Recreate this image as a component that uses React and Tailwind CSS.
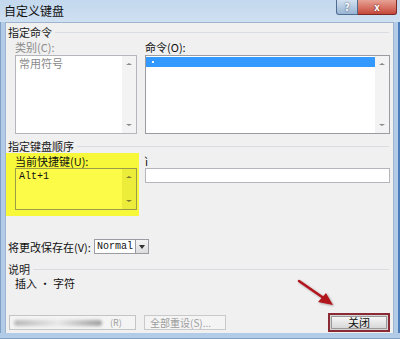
const cn = { fontFamily: '"Noto Sans CJK SC", "Noto Sans", sans-serif' };
const mono = { fontFamily: '"Liberation Mono", "DejaVu Sans Mono", monospace' };

function ScrollArrows({ tint = "bg-[#f3f3f3]", up = "border-b-[#8a8a8a]", down = "border-t-[#8a8a8a]" }) {
  return (
    <div className={`w-[14px] h-full flex flex-col justify-between items-center py-[7px] ${tint}`}>
      <span className={`w-0 h-0 border-x-[3px] border-x-transparent border-b-[2px] ${up}`} />
      <span className={`w-0 h-0 border-x-[3px] border-x-transparent border-t-[2px] ${down}`} />
    </div>
  );
}

function GroupHeader({ children }) {
  return (
    <div className="h-[14px] flex items-center pl-[2px] pr-[4px] text-[11px] text-[#1a1a1a] leading-[14px]">
      <span className="whitespace-nowrap">{children}</span>
      <span className="flex-1 ml-[3px] border-t border-[#d9dde2]" />
    </div>
  );
}

export default function App() {
  return (
    <div className="relative w-[400px] h-[339px] overflow-hidden bg-[#b7cfe9] flex flex-col" style={cn}>
      {/* title bar */}
      <div className="h-[22px] flex items-start bg-gradient-to-b from-[#c3d8ee] to-[#cfe0f1]">
        <span className="pl-[4px] pt-[4px] text-[12px] leading-[14px] text-[#111]">自定义键盘</span>
        <div className="ml-auto flex mr-[3px]">
          <div className="w-[22px] h-[15px] rounded-bl-[3px] border border-t-0 border-[#4f6d93] bg-gradient-to-b from-[#d3e1f0] to-[#98b4d3] flex items-center justify-center text-[10px] font-bold text-white leading-none" style={{ textShadow: "0 0 2px #2a4060" }}>?</div>
          <div className="w-[39px] h-[15px] rounded-br-[3px] border border-t-0 border-l-0 border-[#7a2a24] bg-gradient-to-b from-[#e6a295] to-[#c5463a] flex items-center justify-center text-[10px] font-bold text-white leading-none" style={{ textShadow: "0 0 2px #5a1010" }}>x</div>
        </div>
      </div>

      <div className="flex flex-1">
        <div className="w-[5px] bg-[#b2cbe6] border-l border-[#7f9fc4]" />
        {/* client area */}
        <div className="w-[389px] bg-[#f0f0f0] flex flex-col border border-[#9fb5cf] border-b-0">
          <div className="mt-[2px]">
            <GroupHeader>指定命令</GroupHeader>
          </div>

          <div className="flex gap-[8px] pl-[9px]">
            <div className="w-[122px] flex flex-col">
              <div className="h-[16px] flex items-center text-[11px] text-[#8a8a8a] leading-[14px]">类别(C):</div>
              <div className="h-[79px] border border-[#b4b6bb] bg-white flex">
                <div className="flex-1 pl-[3px] pt-[1px] text-[11px] leading-[13px] text-[#8a8a8a]">常用符号</div>
                <ScrollArrows />
              </div>
            </div>
            <div className="w-[245px] flex flex-col">
              <div className="h-[16px] flex items-center text-[11px] text-[#111] leading-[14px]">命令(O):</div>
              <div className="h-[79px] border border-[#9a9ca2] bg-white flex">
                <div className="flex-1 pt-[1px]">
                  <div className="h-[10px] bg-[#3399ff] flex items-center pl-[6px]">
                    <span className="w-[2px] h-[2px] bg-white" />
                  </div>
                </div>
                <ScrollArrows />
              </div>
            </div>
          </div>

          <div className="mt-[5px]">
            <GroupHeader>指定键盘顺序</GroupHeader>
          </div>

          <div className="flex">
            <div className="w-[133px] bg-[#f8f83a] pl-[9px] pr-[2px] pb-[6px] flex flex-col">
              <div className="h-[15px] flex items-end text-[11px] text-[#111] leading-[14px]">当前快捷键(U):</div>
              <div className="h-[42px] border border-[#9c9c46] bg-[#fbfb48] flex">
                <div className="flex-1 pl-[3px] pt-[2px] text-[10px] leading-[12px] text-[#111]" style={mono}>Alt+1</div>
                <ScrollArrows tint="bg-[#ecec3a]" up="border-b-[#7a7a30]" down="border-t-[#7a7a30]" />
              </div>
            </div>
            <div className="ml-[6px] w-[245px] flex flex-col">
              <div className="h-[15px] flex items-end text-[11px] text-[#111] leading-[14px]">ì</div>
              <div className="h-[15px] border border-[#b4b6bb] bg-white" />
            </div>
          </div>

          <div className="mt-[23px] h-[15px] flex items-center pl-[2px]">
            <span className="w-[86px] whitespace-nowrap text-[11px] text-[#111] leading-[14px]">将更改保存在(V):</span>
            <div className="w-[55px] h-[15px] border border-[#9a9ca2] bg-white flex">
              <span className="flex-1 pl-[2px] text-[10px] leading-[13px] text-[#111]" style={mono}>Normal</span>
              <div className="w-[13px] border-l border-[#9a9ca2] bg-gradient-to-b from-[#f4f4f4] to-[#dcdcdc] flex items-center justify-center">
                <span className="w-0 h-0 border-x-[3px] border-x-transparent border-t-[4px] border-t-[#333]" />
              </div>
            </div>
          </div>

          <div className="mt-[8px]">
            <GroupHeader>说明</GroupHeader>
          </div>
          <div className="h-[14px] flex items-center pl-[9px] text-[11px] text-[#111] leading-[14px]">插入 · 字符</div>

          <div className="mt-[23px] flex items-center">
            <div className="ml-[3px] w-[127px] h-[15px] border border-[#c4c4c4] bg-[#f4f4f4] flex items-center">
              <div className="ml-[4px] w-[88px] h-[6px] rounded-full bg-gradient-to-r from-[#b8b8b8] via-[#e8e8e8] to-[#a0a0a0] blur-[1.5px]" />
              <span className="ml-[8px] text-[9px] text-[#a0a0a0] leading-none">(R)</span>
            </div>
            <div className="ml-[8px] w-[82px] h-[15px] border border-[#c9c9c9] bg-[#f4f4f4] flex items-center pl-[5px] text-[10px] text-[#9c9c9c] leading-none whitespace-nowrap">全部重设(S)...</div>
            <div className="ml-auto mr-[3px] p-[1px] border-[2px] border-[#8a2a34] bg-[#d6d6d6]">
              <div className="w-[56px] h-[13px] bg-gradient-to-b from-[#f6f6f6] to-[#d8d8d8] border border-[#9a9a9a] flex items-center justify-center text-[11px] text-[#111] leading-none">关闭</div>
            </div>
          </div>
        </div>
        <div className="flex-1 bg-[#b2cbe6] border-r-[2px] border-[#4d7db8]" />
      </div>
      <div className="h-[6px] bg-[#b2cbe6] border-b border-[#7f9fc4]" />

      {/* red arrow annotation */}
      <svg className="absolute left-0 top-0 pointer-events-none" width="400" height="339">
        <defs>
          <filter id="sh" x="-20%" y="-20%" width="140%" height="140%">
            <feDropShadow dx="1" dy="1" stdDeviation="1" floodColor="#000" floodOpacity="0.35" />
          </filter>
        </defs>
        <g filter="url(#sh)">
          <line x1="299" y1="281" x2="325" y2="299" stroke="#b0141c" strokeWidth="2.5" strokeLinecap="round" />
          <polygon points="333,305 318,302 326,293" fill="#b0141c" />
        </g>
      </svg>
    </div>
  );
}
